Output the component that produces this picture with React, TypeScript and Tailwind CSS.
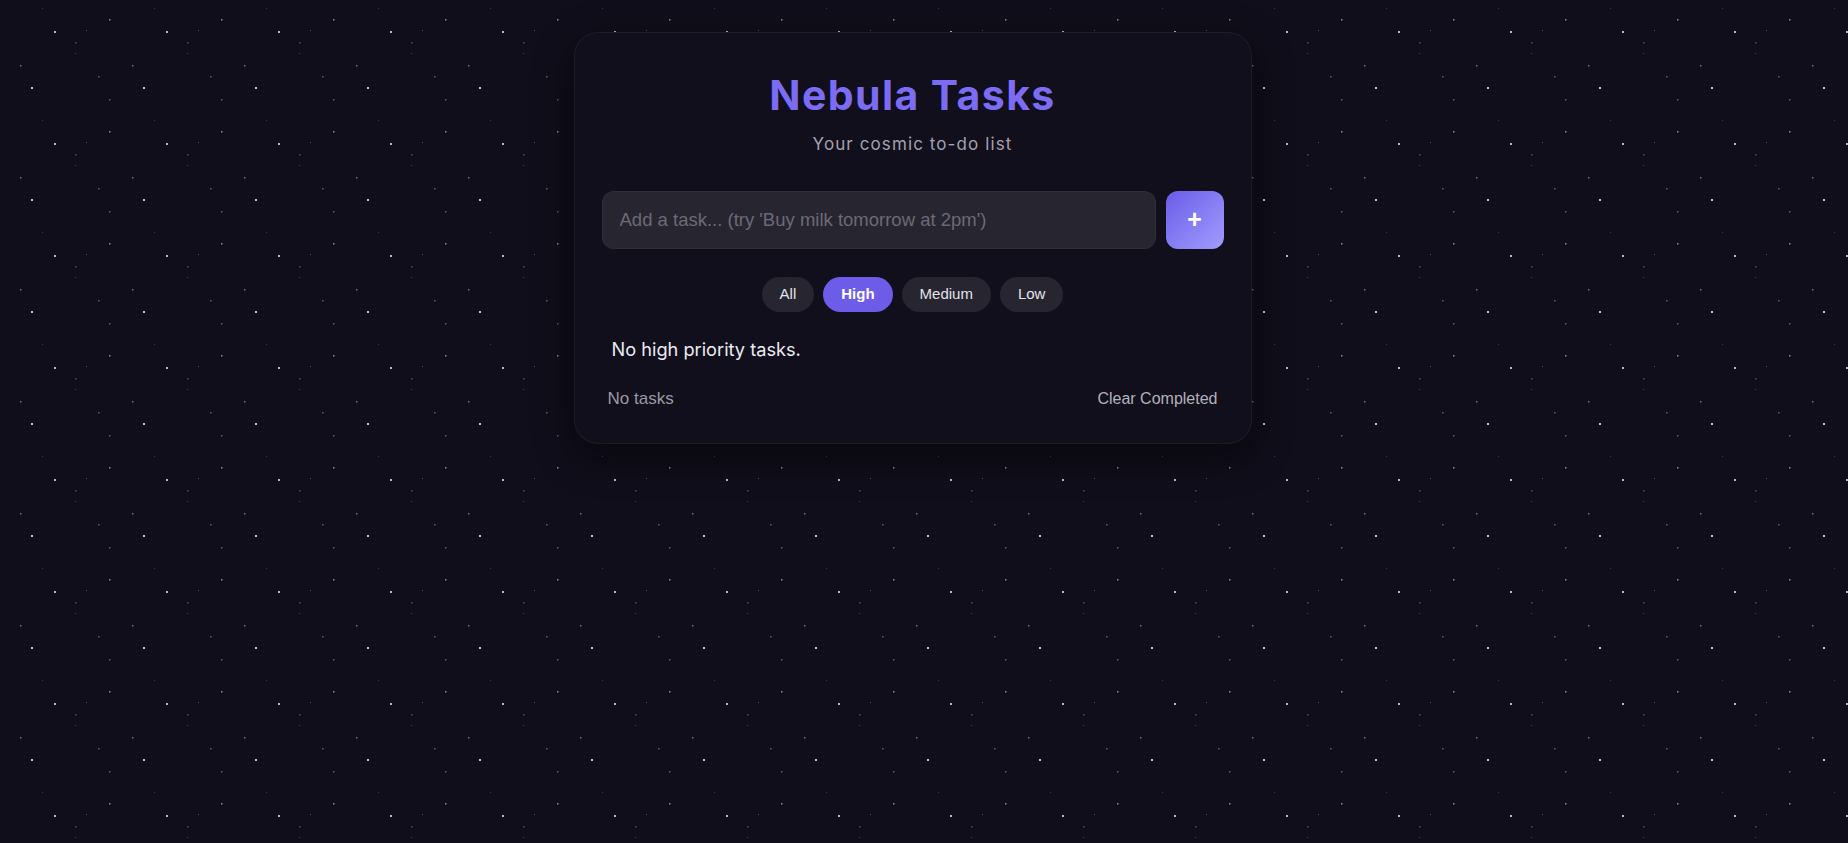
import { useState } from "react";

type Filter = "all" | "high" | "medium" | "low";

const filters: { key: Filter; label: string }[] = [
  { key: "all", label: "All" },
  { key: "high", label: "High" },
  { key: "medium", label: "Medium" },
  { key: "low", label: "Low" },
];

// star field tile, 112px square, repeated over the page
const stars = [
  { x: 42, y: 8, s: 1, c: "#3b3a4a" },
  { x: 109, y: 19, s: 1.5, c: "#8c8b98" },
  { x: 54, y: 31, s: 2, c: "#b9b8c2" },
  { x: 86, y: 30, s: 1, c: "#5a596c" },
  { x: 75, y: 42, s: 1.5, c: "#4c4b5c" },
  { x: 75, y: 53, s: 1, c: "#474654" },
  { x: 20, y: 65, s: 1.5, c: "#6e6d7c" },
  { x: 98, y: 76, s: 1.5, c: "#5d5c6c" },
  { x: 31, y: 87, s: 2, c: "#c4c3cc" },
  { x: 109, y: 99, s: 1.5, c: "#5d5c6a" },
];

function StarField() {
  return (
    <svg className="absolute inset-0 w-full h-full pointer-events-none" aria-hidden="true">
      <defs>
        <pattern id="stars" width="112" height="112" patternUnits="userSpaceOnUse">
          {stars.map((d, i) => (
            <rect key={i} x={d.x} y={d.y} width={d.s} height={d.s} fill={d.c} />
          ))}
        </pattern>
      </defs>
      <rect width="100%" height="100%" fill="url(#stars)" />
    </svg>
  );
}

export default function App() {
  const [filter, setFilter] = useState<Filter>("high");
  const [text, setText] = useState("");

  return (
    <div className="relative min-h-screen w-full overflow-hidden bg-[#0f0e1a]">
      <StarField />

      {/* --- CARD --- */}
      <div className="relative z-10 flex justify-center pt-[32px] pr-[23px]">
        <div className="w-[678px] rounded-[24px] border border-white/[0.05] bg-[#100f1b] shadow-[0_12px_40px_rgba(0,0,0,0.45)] px-[27px] pt-[38px] pb-[34px]">
          <h1 className="text-center font-['Inter',sans-serif] text-[41px] leading-[48px] font-bold tracking-[1.4px] text-[#7b6cf3]">
            Nebula Tasks
          </h1>
          <p className="mt-[13px] text-center font-['Inter',sans-serif] text-[17px] leading-[24px] tracking-[1.1px] text-[#a3a1b0]">
            Your cosmic to-do list
          </p>

          {/* --- INPUT ROW --- */}
          <div className="mt-[35px] flex gap-[10px]">
            <input
              value={text}
              onChange={(e) => setText(e.target.value)}
              placeholder="Add a task... (try 'Buy milk tomorrow at 2pm')"
              className="h-[58px] flex-1 rounded-[12px] border border-white/[0.04] bg-[#27252f] px-[17px] font-['Liberation_Sans',Arial,sans-serif] text-[18.5px] text-[#e8e7ef] outline-none placeholder:text-[#6c6a77]"
            />
            <button className="flex h-[58px] w-[58px] items-center justify-center rounded-[12px] bg-gradient-to-br from-[#6c5ce7] to-[#a29bfe] font-['Liberation_Sans',Arial,sans-serif] text-[25px] font-bold text-white">
              +
            </button>
          </div>

          {/* --- FILTERS --- */}
          <div className="mt-[28px] flex justify-center gap-[9px]">
            {filters.map((f) => (
              <button
                key={f.key}
                onClick={() => setFilter(f.key)}
                className={
                  filter === f.key
                    ? "h-[35px] rounded-full bg-[#6c5ce7] px-[18px] font-['Liberation_Sans',Arial,sans-serif] text-[15px] font-bold text-white"
                    : "h-[35px] rounded-full bg-[#27252f] px-[18px] font-['Liberation_Sans',Arial,sans-serif] text-[15px] text-[#e3e2ea]"
                }
              >
                {f.label}
              </button>
            ))}
          </div>

          <p className="mt-[25px] px-[10px] font-['Inter',sans-serif] text-[18.2px] leading-[24px] text-[#ecebf2]">
            No {filter === "all" ? "" : filter + " priority "}tasks.
          </p>

          {/* --- FOOTER --- */}
          <div className="mt-[28px] flex items-center justify-between px-[6px] font-['Liberation_Sans',Arial,sans-serif] leading-[20px]">
            <span className="text-[17px] text-[#9b99a6]">No tasks</span>
            <button className="text-[16px] text-[#b3b1bc]">Clear Completed</button>
          </div>
        </div>
      </div>
    </div>
  );
}
